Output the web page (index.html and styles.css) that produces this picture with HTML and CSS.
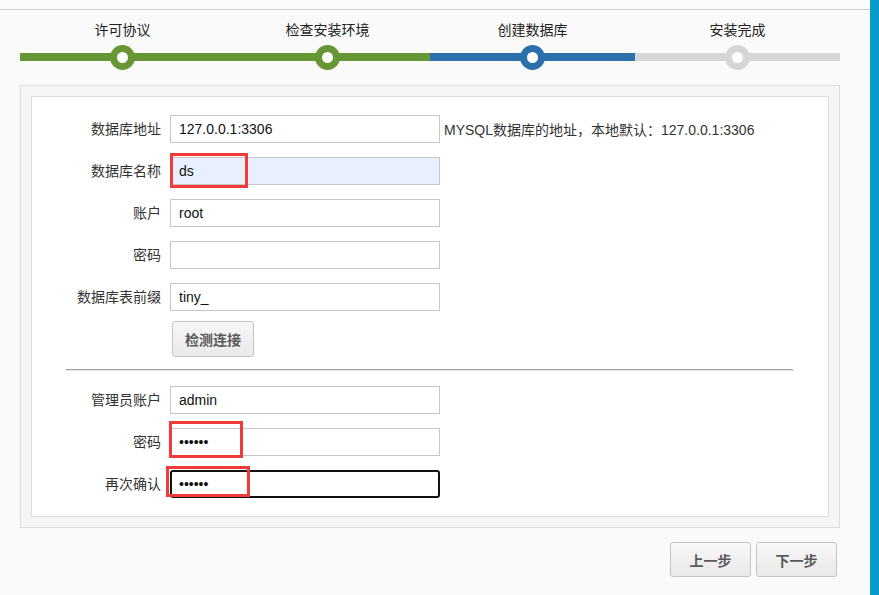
FILE: index.html
```html
<!DOCTYPE html>
<html lang="zh-CN">
<head>
<meta charset="utf-8">
<title>安装向导 - 创建数据库</title>
<link rel="stylesheet" href="styles.css">
</head>
<body>
<div class="page">
  <main class="main">
    <div class="topbar"></div>
    <div class="steps">
      <div class="step done">
        <div class="step-label">许可协议</div>
        <div class="step-track"><span class="dot"></span></div>
      </div>
      <div class="step done">
        <div class="step-label">检查安装环境</div>
        <div class="step-track"><span class="dot"></span></div>
      </div>
      <div class="step current">
        <div class="step-label">创建数据库</div>
        <div class="step-track"><span class="dot"></span></div>
      </div>
      <div class="step todo">
        <div class="step-label">安装完成</div>
        <div class="step-track"><span class="dot"></span></div>
      </div>
    </div>

    <div class="panel">
      <div class="panel-inner">
        <div class="rows">
          <div class="row">
            <label class="label">数据库地址</label>
            <input class="field" type="text" value="127.0.0.1:3306">
            <span class="hint">MYSQL数据库的地址，本地默认：127.0.0.1:3306</span>
          </div>
          <div class="row">
            <label class="label">数据库名称</label>
            <span class="wrap">
              <input class="field autofill" type="text" value="ds">
              <span class="mark mark-ds"></span>
            </span>
          </div>
          <div class="row">
            <label class="label">账户</label>
            <input class="field" type="text" value="root">
          </div>
          <div class="row">
            <label class="label">密码</label>
            <input class="field" type="password" value="">
          </div>
          <div class="row">
            <label class="label">数据库表前缀</label>
            <input class="field" type="text" value="tiny_">
          </div>
        </div>
        <div class="check-row">
          <button class="btn btn-check" type="button">检测连接</button>
        </div>
        <div class="sep"></div>
        <div class="rows">
          <div class="row">
            <label class="label">管理员账户</label>
            <input class="field" type="text" value="admin">
          </div>
          <div class="row">
            <label class="label">密码</label>
            <span class="wrap">
              <input class="field" type="password" value="123456">
              <span class="mark mark-pw"></span>
            </span>
          </div>
          <div class="row">
            <label class="label">再次确认</label>
            <span class="wrap">
              <input class="field focused" type="password" value="123456">
              <span class="mark mark-confirm"></span>
            </span>
          </div>
        </div>
      </div>
    </div>

    <div class="actions">
      <button class="btn btn-nav" type="button">上一步</button>
      <button class="btn btn-nav" type="button">下一步</button>
    </div>
  </main>
  <aside class="side-strip"></aside>
</div>
</body>
</html>
```

FILE: styles.css
```css
* { box-sizing: border-box; }

html, body {
  margin: 0;
  padding: 0;
  height: 100%;
}

body {
  background: #fafafa;
  font-family: "Liberation Sans", "Noto Sans CJK SC", Arial, sans-serif;
  font-size: 14px;
  color: #333;
}

.page {
  display: flex;
  height: 595px;
  overflow: hidden;
}

.main {
  width: 870px;
  flex: none;
}

.side-strip {
  flex: 1;
  background: #0a9bc9;
}

.topbar {
  height: 10px;
  border-bottom: 1px solid #cfcfcf;
  background: #fbfbfb;
}

/* Steps */
.steps {
  display: flex;
  padding: 0 30px 0 20px;
}

.step {
  width: 205px;
  display: flex;
  flex-direction: column;
  align-items: center;
}

.step-label {
  margin-top: 10px;
  height: 20px;
  line-height: 20px;
  font-size: 14px;
  color: #222;
  white-space: nowrap;
}

.step-track {
  margin-top: 5px;
  width: 100%;
  height: 25px;
  display: flex;
  justify-content: center;
  align-items: center;
  background: linear-gradient(to bottom, transparent 8px, var(--c) 8px, var(--c) 16px, transparent 16px);
}

.dot {
  width: 25px;
  height: 25px;
  border-radius: 50%;
  background: #fff;
  border: 7px solid var(--c);
}

.done { --c: #679634; }
.current { --c: #2b70ad; }
.todo { --c: #d6d6d6; }

/* Panel */
.panel {
  margin: 15px 30px 0 20px;
  border: 1px solid #dcdcdc;
  background: #f5f5f5;
  padding: 10px;
}

.panel-inner {
  border: 1px solid #dcdcdc;
  background: #fff;
  padding: 18px 0 18px 0;
}

.rows {
  display: flex;
  flex-direction: column;
  gap: 14px;
}

.row {
  display: flex;
  align-items: center;
  height: 28px;
}

.label {
  width: 129px;
  margin-right: 9px;
  text-align: right;
  color: #333;
  font-size: 14px;
  line-height: 20px;
  white-space: nowrap;
}

.wrap {
  position: relative;
  display: block;
  width: 270px;
  height: 28px;
}

.field {
  display: block;
  width: 270px;
  height: 28px;
  margin: 0;
  padding: 0 8px;
  border: 1px solid #c6c6c6;
  border-radius: 0;
  background: #fff;
  font-family: "Liberation Sans", Arial, sans-serif;
  font-size: 14px;
  color: #111;
  outline: none;
}

.field.autofill {
  background: #e8f0fe;
}

.field.focused {
  border: 2px solid #111;
  border-radius: 3px;
  padding: 0 7px;
}

.hint {
  margin-left: 4px;
  white-space: nowrap;
  color: #333;
  font-size: 14px;
}

.mark {
  position: absolute;
  border: 3px solid #f23a3a;
  pointer-events: none;
}

.mark-ds { left: 0; top: -4px; width: 78px; height: 35px; }
.mark-pw { left: -1px; top: -7px; width: 74px; height: 37px; }
.mark-confirm { left: -4px; top: -4px; width: 84px; height: 31px; }

.check-row {
  margin-top: 10px;
  padding-left: 140px;
}

.btn {
  font-family: "Liberation Sans", "Noto Sans CJK SC", Arial, sans-serif;
  font-size: 14px;
  font-weight: bold;
  color: #5a5a5a;
  background: linear-gradient(to bottom, #f7f7f7, #e9e9e9);
  border: 1px solid #c4c4c4;
  border-radius: 3px;
  padding: 0;
  cursor: pointer;
}

.btn-check {
  width: 82px;
  height: 36px;
}

.sep {
  margin: 12px 35px 15px 34px;
  height: 2px;
  border-top: 1px solid #a3a3a3;
  border-bottom: 1px solid #e4e4e4;
}

.actions {
  display: flex;
  justify-content: flex-end;
  gap: 5px;
  margin: 14px 33px 0 0;
}

.btn-nav {
  width: 81px;
  height: 35px;
}
```
